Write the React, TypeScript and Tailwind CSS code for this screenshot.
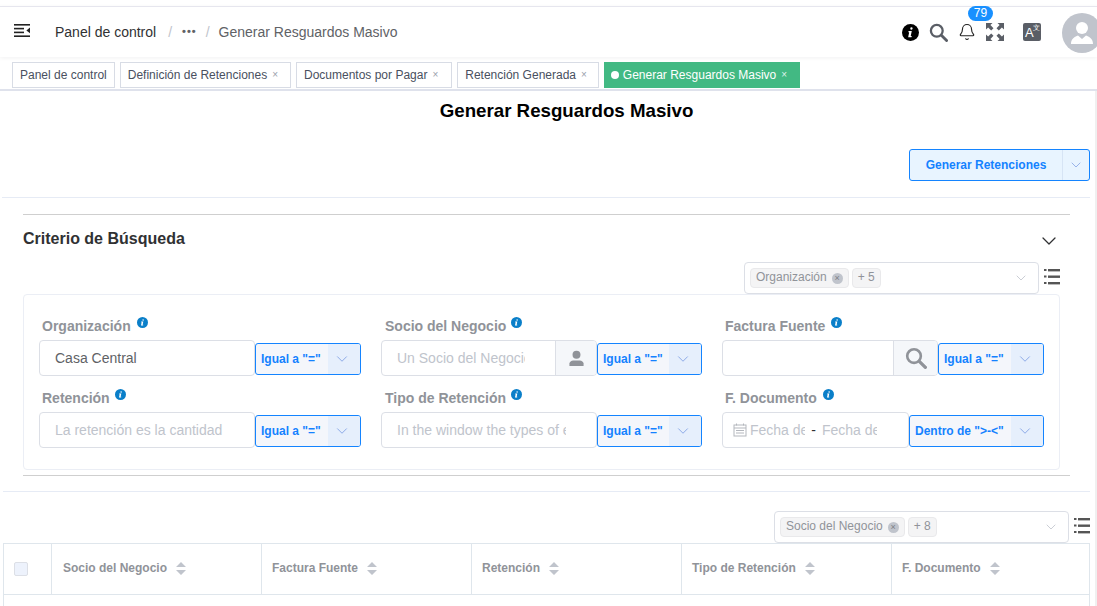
import React from "react";
import { ChevronDown, Bell } from "lucide-react";

const Info = ({ className = "" }: { className?: string }) => (
  <svg viewBox="0 0 16 16" className={className}>
    <circle cx="8" cy="8" r="8" fill="currentColor" />
    <path d="M8.9 3.1a1.1 1.1 0 1 1-.01 2.2 1.1 1.1 0 0 1 .01-2.2zM6.2 6.7h3l-1 4.6h1l-.3 1.1H5.8l.95-4.6h-.8z" fill="#fff" />
  </svg>
);

const Search = ({ className = "" }: { className?: string }) => (
  <svg viewBox="0 0 20 20" fill="none" stroke="currentColor" className={className}>
    <circle cx="8.2" cy="8.2" r="6.2" strokeWidth="2.4" />
    <path d="M13 13l5.5 5.5" strokeWidth="3" strokeLinecap="round" />
  </svg>
);

const Person = ({ className = "" }: { className?: string }) => (
  <svg viewBox="0 0 18 18" fill="currentColor" className={className}>
    <circle cx="9" cy="5" r="4.2" />
    <path d="M1.5 17v-2.6c0-2 2-3.4 4-3.4h7c2 0 4 1.4 4 3.4V17z" />
  </svg>
);

const ListIcon = () => (
  <svg viewBox="0 0 16 17" className="w-4 h-[17px] text-[#555] self-start mt-[6px]" fill="currentColor">
    <rect x="0" y="1" width="2.5" height="2" />
    <rect x="4" y="1" width="12" height="2.4" />
    <rect x="0" y="7.5" width="2.5" height="2" />
    <rect x="4" y="7.5" width="12" height="2.4" />
    <rect x="0" y="14" width="2.5" height="2" />
    <rect x="4" y="14" width="12" height="2.4" />
  </svg>
);

const SortIcon = () => (
  <svg viewBox="0 0 10 13" className="w-[10px] h-[13px] text-[#c0c4cc]" fill="currentColor">
    <path d="M5 0l5 5H0zM0 8h10l-5 5z" />
  </svg>
);

const OpSelect = ({ label, w }: { label: string; w: string }) => (
  <div className={`${w} h-8 mt-[2px] flex border border-[#1484ff] rounded-[3px] bg-[#f4f6fb] text-[#1482ff] text-xs font-bold overflow-hidden shrink-0`}>
    <span className="flex-1 pl-[5px] flex items-center whitespace-nowrap">{label}</span>
    <span className="w-[32px] pl-[5px] bg-[#e6effc] flex items-center">
      <ChevronDown className="w-[18px] h-[18px] text-[#6f93e0]" strokeWidth={1} />
    </span>
  </div>
);

const Label = ({ text, gap, pad = "pl-[3px]" }: { text: string; gap: string; pad?: string }) => (
  <div className={`h-5 flex items-center ${pad} mb-1 font-bold text-sm text-[#909399]`}>
    <span>{text}</span>
    <Info className={`w-[11px] h-[11px] text-[#0a7fc9] ${gap} -mt-[8px]`} />
  </div>
);

const TextField = ({ placeholder, value }: { placeholder?: string; value?: string }) => (
  <input
    readOnly
    placeholder={placeholder}
    value={value ?? ""}
    className="w-[216px] h-9 border border-[#dcdfe6] rounded-[4px] pl-[15px] pr-[30px] text-sm text-[#606266] placeholder:text-[#c0c4cc] outline-none shrink-0"
  />
);

const AppendField = ({ placeholder, icon, w }: { placeholder?: string; icon: React.ReactNode; w: string }) => (
  <div className="w-[216px] h-9 flex border border-[#dcdfe6] rounded-[4px] overflow-hidden shrink-0">
    <input
      readOnly
      placeholder={placeholder}
      className="flex-1 min-w-0 pl-[15px] pr-[30px] text-sm text-[#606266] placeholder:text-[#c0c4cc] outline-none"
    />
    <span className={`${w} border-l border-[#dcdfe6] bg-[#f5f7fa] flex items-center justify-center text-[#909399] shrink-0`}>{icon}</span>
  </div>
);

const Tag = ({ children }: { children: React.ReactNode }) => (
  <span className="h-5 flex items-center gap-[5px] px-[5px] pb-[2px] bg-[#f4f4f5] border border-[#e9e9eb] rounded-[4px] text-xs text-[#909399] whitespace-nowrap">{children}</span>
);

const TagClose = () => (
  <span className="w-[11px] h-[11px] mt-[2px] rounded-full bg-[#c0c4cc] text-[#7c7f85] text-[9px] leading-[11px] text-center">×</span>
);

const MultiSelect = ({ tag, more }: { tag: string; more: string }) => (
  <div className="w-[295px] h-8 border border-[#dcdfe6] rounded-[4px] bg-white flex items-center pl-[5px] pr-[9px] shrink-0">
    <Tag>
      {tag}
      <TagClose />
    </Tag>
    <span className="w-[3px]" />
    <Tag>{more}</Tag>
    <ChevronDown className="w-4 h-4 ml-auto text-[#c0c4cc]" strokeWidth={1.25} />
  </div>
);

const tabs = [
  { t: "Definición de Retenciones", pr: "pr-[12px]" },
  { t: "Documentos por Pagar", pr: "pr-[13px]" },
  { t: "Retención Generada", pr: "pr-[11px]" },
];
const cols = [
  { c: "Socio del Negocio", pl: "pl-[11px]" },
  { c: "Factura Fuente", pl: "pl-[10px]" },
  { c: "Retención", pl: "pl-[10px]" },
  { c: "Tipo de Retención", pl: "pl-[10px]" },
  { c: "F. Documento", pl: "pl-[10px]" },
];

export default function App() {
  return (
    <div className="w-[1097px] h-[606px] overflow-hidden bg-white text-[#303133] font-['Liberation_Sans',Arial,sans-serif]">
      <div className="h-[6px]" />
      {/* Top bar */}
      <header className="h-[51px] border-t border-[#e6e6ee] flex items-center pl-[14px] shadow-[0_1px_4px_rgba(0,21,41,0.06)]">
        <svg viewBox="0 0 16 13" className="w-4 h-[13px] text-[#222] -mt-[4px]" fill="currentColor">
          <rect x="0" y="0" width="16" height="1.6" />
          <rect x="0" y="3.8" width="10" height="1.6" />
          <rect x="0" y="7.6" width="10" height="1.6" />
          <rect x="0" y="11.4" width="16" height="1.6" />
          <path d="M16 3.6v5.6l-3.6-2.8z" />
        </svg>
        <span className="ml-[25px] text-sm text-[#303133]">Panel de control</span>
        <span className="ml-[12px] text-sm text-[#c0c4cc]">/</span>
        <span className="ml-[10px] text-[11px] font-bold text-[#606266] tracking-[1px] -mt-[1px]">•••</span>
        <span className="ml-[9px] text-sm text-[#c0c4cc]">/</span>
        <span className="ml-[9px] text-sm text-[#606266]">Generar Resguardos Masivo</span>

        <div className="ml-auto flex items-center">
          <Info className="w-[17px] h-[17px] text-black" />
          <Search className="w-[19px] h-[19px] text-[#5a5e66] ml-[10px]" />
          <span className="relative ml-[10px] w-[18px] h-[18px] text-[#222]">
            <Bell className="w-[18px] h-[18px]" strokeWidth={1.5} />
            <span className="absolute -top-[17px] left-[10px] w-[25px] h-[15px] rounded-full bg-[#1890ff] text-white text-xs leading-[15px] text-center">79</span>
          </span>
          <svg viewBox="0 0 18 18" className="w-[18px] h-[18px] ml-[10px] text-[#5a5e66]" fill="currentColor">
            <path d="M0 0h6.5L4.4 2.1 7.5 5.2 5.2 7.5 2.1 4.4 0 6.5zM18 0v6.5l-2.1-2.1-3.1 3.1-2.3-2.3 3.1-3.1L11.5 0zM0 18v-6.5l2.1 2.1 3.1-3.1 2.3 2.3-3.1 3.1L6.5 18zM18 18h-6.5l2.1-2.1-3.1-3.1 2.3-2.3 3.1 3.1 2.1-2.1z" />
          </svg>
          <span className="ml-[19px] w-[18px] h-[18px] rounded-[2px] bg-[#5a5e66] relative text-white text-[13px] leading-[19px] pl-[2px] block">
            A
            <span className="absolute top-[1px] right-[1px] text-[7px] leading-[7px]">文</span>
          </span>
          <span className="ml-[21px] -mr-[5px] w-10 h-10 rounded-full bg-[#c0c4cc] block mt-[2px]">
            <svg viewBox="0 0 40 40" className="w-10 h-10" fill="#fff">
              <circle cx="20" cy="15" r="6" />
              <path d="M9 31c0-4 2-6.500 7-8.500l4 3.500 4-3.500c5 2 7 4.500 7 8.500z" />
            </svg>
          </span>
        </div>
      </header>

      {/* Tags view */}
      <div className="h-[34px] pt-[5px] pl-[12px] flex gap-[5px] border-b-2 border-[#dfe2ec] text-xs">
        <div className="h-[26px] flex items-center px-[7px] border border-[#d8dce5] text-[#495060]">Panel de control</div>
        {tabs.map(({ t, pr }) => (
          <div key={t} className={`h-[26px] flex items-center gap-[5px] pl-[7px] ${pr} border border-[#d8dce5] text-[#495060]`}>
            {t}
            <span className="text-[10px] text-[#9aa0ab]">×</span>
          </div>
        ))}
        <div className="h-[26px] flex items-center gap-[5px] pl-[7px] pr-[13px] bg-[#42b983] text-white">
          <span className="flex items-center gap-[4px]">
            <span className="w-[8px] h-[8px] rounded-full bg-white" />
            Generar Resguardos Masivo
          </span>
          <span className="text-[10px] text-[#dff3ea]">×</span>
        </div>
      </div>

      <div className="flex h-[515px]">
        {/* Page */}
        <main className="w-[1090px]">
          <h1 className="mt-[9px] h-[22px] leading-[22px] text-center text-[18.72px] font-bold text-black pl-[43px]">Generar Resguardos Masivo</h1>

          <div className="mt-[27px] flex justify-end">
            <div className="w-[181px] h-8 flex border border-[#1484ff] rounded-[3px] bg-[#e8f4ff] text-[#1482ff] text-xs font-bold overflow-hidden">
              <span className="flex-1 flex items-center justify-center whitespace-nowrap">Generar Retenciones</span>
              <span className="w-[27px] border-l border-[#d6e4f5] flex items-center justify-center">
                <ChevronDown className="w-4 h-4 text-[#6f93e0]" strokeWidth={1} />
              </span>
            </div>
          </div>

          <div className="mt-4 ml-[2px] border-t border-[#e6ebf5]" />
          <div className="mt-4 ml-[23px] w-[1047px] border-t border-[#cfcfcf]" />

          <div className="mt-[12px] ml-[23px] w-[1036px] h-6 flex items-center justify-between">
            <span className="text-base font-bold text-[#303133]">Criterio de Búsqueda</span>
            <ChevronDown className="w-6 h-6 text-[#303133] mt-[3px] -mr-[2px]" strokeWidth={1.25} />
          </div>

          <div className="mt-[11px] ml-[744px] flex items-center gap-[5px]">
            <MultiSelect tag="Organización" more="+ 5" />
            <ListIcon />
          </div>

          <div className="ml-[23px] w-[1037px] h-[176px] border border-[#ebeef5] rounded-[4px] pt-[21px] pl-[15px] grid grid-cols-[342px_341px_1fr] gap-y-3 content-start">
            <div>
              <Label text="Organización" gap="ml-[6px]" />
              <div className="flex items-center">
                <TextField value="Casa Central" />
                <OpSelect label='Igual a "="' w="w-[106px]" />
              </div>
            </div>
            <div>
              <Label text="Socio del Negocio" gap="ml-[5px]" pad="pl-[4px]" />
              <div className="flex items-center">
                <AppendField w="w-[41px]" placeholder="Un Socio del Negocio" icon={<Person className="w-[17px] h-[17px]" />} />
                <OpSelect label='Igual a "="' w="w-[105px]" />
              </div>
            </div>
            <div>
              <Label text="Factura Fuente" gap="ml-[6px]" />
              <div className="flex items-center">
                <AppendField w="w-[44px]" icon={<Search className="w-[22px] h-[22px]" />} />
                <OpSelect label='Igual a "="' w="w-[106px]" />
              </div>
            </div>
            <div>
              <Label text="Retención" gap="ml-[5px]" />
              <div className="flex items-center">
                <TextField placeholder="La retención es la cantidad" />
                <OpSelect label='Igual a "="' w="w-[106px]" />
              </div>
            </div>
            <div>
              <Label text="Tipo de Retención" gap="ml-[5px]" pad="pl-[4px]" />
              <div className="flex items-center">
                <TextField placeholder="In the window the types of expenses" />
                <OpSelect label='Igual a "="' w="w-[105px]" />
              </div>
            </div>
            <div>
              <Label text="F. Documento" gap="ml-[6px]" />
              <div className="flex items-center">
                <div className="w-[187px] h-9 border border-[#dcdfe6] rounded-[4px] flex items-center pl-[10px] text-sm shrink-0">
                  <svg viewBox="0 0 14 14" className="w-[14px] h-[14px] text-[#b4b7bd] shrink-0" fill="none" stroke="currentColor" strokeWidth="1">
                    <rect x="1" y="2" width="12" height="11" />
                    <path d="M1 5h12M3.500 0.500v2M10.500 0.500v2M3 7.500h8M3 10h8" />
                  </svg>
                  <input readOnly placeholder="Fecha de inicio" className="w-[55px] ml-[3px] placeholder:text-[#c0c4cc] outline-none" />
                  <span className="w-[17px] text-center text-[#303133]">-</span>
                  <input readOnly placeholder="Fecha de fin" className="w-[55px] placeholder:text-[#c0c4cc] outline-none" />
                </div>
                <OpSelect label='Dentro de ">-<"' w="w-[135px]" />
              </div>
            </div>
          </div>

          <div className="mt-[5px] ml-[23px] w-[1047px] border-t border-[#cfcfcf]" />
          <div className="mt-[15px] ml-[3px] border-t border-[#e6ebf5]" />

          <div className="mt-[19px] ml-[774px] flex items-center gap-[5px] w-[320px]">
            <MultiSelect tag="Socio del Negocio" more="+ 8" />
            <ListIcon />
          </div>

          <div className="ml-[3px] h-[70px] border-x border-t border-[#dfe6ec]">
            <div className="h-[51px] border-b border-[#dfe6ec] grid grid-cols-[47px_210px_210px_210px_210px_1fr]">
              <div className="flex items-center pl-[10px]">
                <span className="w-[14px] h-[14px] bg-[#edf2fc] border border-[#dcdfe6] rounded-[2px]" />
              </div>
              {cols.map(({ c, pl }) => (
                <div key={c} className={`border-l border-[#dfe6ec] flex items-center gap-[9px] ${pl} pb-[2px] text-xs font-bold text-[#909399]`}>
                  {c}
                  <SortIcon />
                </div>
              ))}
            </div>
          </div>
        </main>
        <div className="ml-auto w-[2px] bg-[#f0f0f0]" />
      </div>
    </div>
  );
}
